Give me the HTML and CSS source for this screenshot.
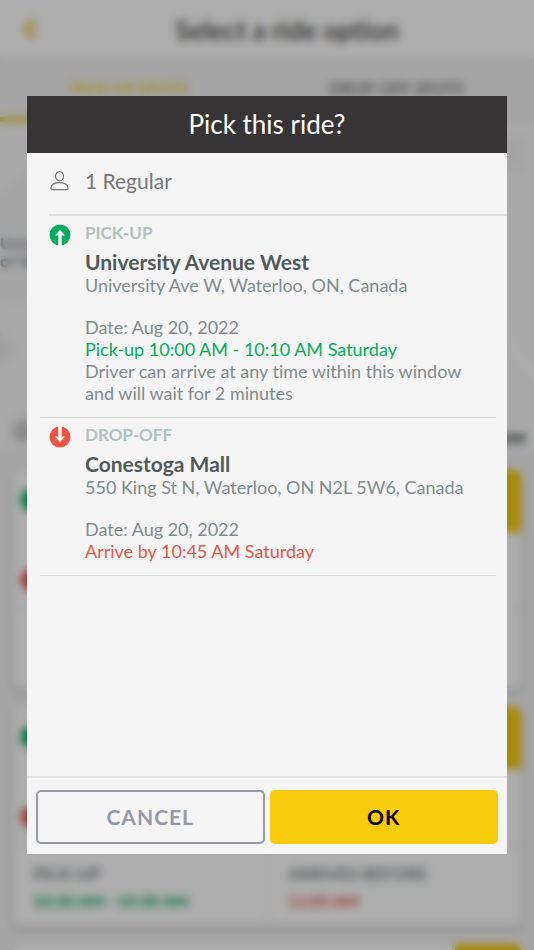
FILE: index.html
```html
<!DOCTYPE html>
<html lang="en">
<head>
<meta charset="utf-8">
<meta name="viewport" content="width=device-width, initial-scale=1">
<title>Pick this ride?</title>
<link rel="stylesheet" href="styles.css">
</head>
<body>
<div class="page" aria-hidden="true" inert>
  <header class="topbar">
    <svg class="back" viewBox="0 0 20 26"><path d="M15 4 6 13l9 9" fill="none" stroke="#ecca3a" stroke-width="5"/></svg>
    <h1 class="topbar-title">Select a ride option</h1>
  </header>
  <nav class="tabs">
    <a class="tab tab-active" href="#pickup">PICK-UP SPOTS</a>
    <a class="tab" href="#dropoff">DROP-OFF SPOTS</a>
  </nav>
  <div class="map">
    <svg class="map-art" viewBox="0 0 534 288" preserveAspectRatio="none">
      <path d="M0 72 30 48v130H0z" fill="#f4f4f4"/>
      <path d="M0 208 16 226 0 244z" fill="#eeeeee"/>
      <path d="M490 0v120q0 110 70 150" fill="none" stroke="#fdfdfd" stroke-width="9"/>
    </svg>
    <div class="map-box"></div>
    <p class="map-label">University<br>of Waterloo</p>
  </div>
  <div class="filter"><span class="filter-icon"></span><span class="filter-text">Now</span></div>
  <main class="rides">
    <article class="ride">
      <div class="ride-top"><div class="stops"><span class="dot green"></span><span class="dot red"></span></div><div class="price"></div></div>
      <div class="ride-times"><div class="time"></div><div class="time"></div></div>
    </article>
    <article class="ride">
      <div class="ride-top"><div class="stops"><span class="dot green"></span><span class="dot red"></span></div><div class="price"></div></div>
      <div class="ride-times">
        <div class="time"><span class="time-label">PICK-UP</span><span class="time-value green-text">10:20 AM - 10:30 AM</span></div>
        <div class="time"><span class="time-label">ARRIVES BEFORE</span><span class="time-value red-text">11:05 AM</span></div>
      </div>
    </article>
    <article class="ride">
      <div class="ride-top"><div class="stops"></div><div class="price"></div></div>
    </article>
  </main>
</div>

<div class="overlay">
  <section class="dialog" role="dialog" aria-modal="true" aria-labelledby="dialog-title">
    <h2 class="dialog-title" id="dialog-title">Pick this ride?</h2>
    <div class="dialog-body">
      <div class="riders">
        <svg class="person" viewBox="0 0 20 20" fill="none" stroke="#777" stroke-width="1.2">
          <ellipse cx="10.500" cy="5.2" rx="4" ry="4.6"/>
          <path d="M3.700 18.600h13.600q2 0 1.800-2C18.400 13.200 14.700 11.600 10.500 11.600S2.600 13.200 1.900 16.600q-.2 2 1.800 2z"/>
        </svg>
        <span>1 Regular</span>
      </div>
      <section class="stop">
        <svg class="stop-icon" viewBox="0 0 22 22">
          <circle cx="11" cy="11" r="10.500" fill="#05ad5c"/>
          <path d="M11 5.800 16 11.400H12.700V22H9.300V11.400H6z" fill="#f5f5f5"/>
        </svg>
        <div class="stop-text">
          <h3 class="stop-kind">PICK-UP</h3>
          <p class="stop-name">University Avenue West</p>
          <p class="stop-line">University Ave W, Waterloo, ON, Canada</p>
          <p class="stop-line stop-date">Date: Aug 20, 2022</p>
          <p class="stop-line green-text">Pick-up 10:00 AM - 10:10 AM Saturday</p>
          <p class="stop-line">Driver can arrive at any time within this window and will wait for 2 minutes</p>
        </div>
      </section>
      <section class="stop">
        <svg class="stop-icon" viewBox="0 0 22 22">
          <circle cx="11" cy="11" r="10.500" fill="#ea5545"/>
          <path d="M9.300 0V10.600H6L11 16.200 16 10.600H12.700V0z" fill="#f5f5f5"/>
        </svg>
        <div class="stop-text">
          <h3 class="stop-kind">DROP-OFF</h3>
          <p class="stop-name">Conestoga Mall</p>
          <p class="stop-line">550 King St N, Waterloo, ON N2L 5W6, Canada</p>
          <p class="stop-line stop-date">Date: Aug 20, 2022</p>
          <p class="stop-line red-text">Arrive by 10:45 AM Saturday</p>
        </div>
      </section>
    </div>
    <footer class="actions">
      <button class="btn btn-cancel" type="button">CANCEL</button>
      <button class="btn btn-ok" type="button">OK</button>
    </footer>
  </section>
</div>
</body>
</html>
```
FILE: styles.css
```css
* { box-sizing: border-box; }
body, h1, h2, h3, p { margin: 0; }
body {
  font-family: Lato, "Liberation Sans", sans-serif;
  font-variant-ligatures: none;
  background: #fff;
  overflow: hidden;
}

/* Page behind the dialog */
.page {
  height: 100vh;
  overflow: hidden;
  background: #f4f4f4;
}
.topbar {
  display: flex;
  align-items: center;
  height: 57px;
  padding: 0 0 0 20px;
  background: #fff;
}
.back { width: 20px; height: 26px; }
.topbar-title {
  flex: 1;
  padding-top: 2px;
  text-align: center;
  font-size: 26px;
  font-weight: 700;
  color: #555;
}
.tabs { display: flex; height: 65px; background: #f3f3f3; }
.tab {
  flex: 1;
  padding: 21px 8px 0 0;
  text-align: center;
  font-size: 16px;
  line-height: 20px;
  font-weight: 700;
  color: #777;
  text-decoration: none;
}
.tab-active { color: #ecca3a; border-bottom: 5px solid #ecca3a; }
.map { position: relative; height: 290px; background: #f9f9f9; }
.map-art { display: block; width: 100%; height: 100%; }
.map-box {
  position: absolute;
  top: 15px;
  right: 10px;
  left: 40px;
  height: 34px;
  background: #f2f2f2;
}
.map-label {
  position: absolute;
  top: 112px;
  left: 0;
  font-size: 16px;
  line-height: 18px;
  font-weight: 700;
  color: #8497a3;
}
.filter {
  display: flex;
  justify-content: space-between;
  align-items: center;
  height: 37px;
  padding: 0 8px 0 12px;
  background: #f9f9f9;
}
.filter-icon { width: 24px; height: 24px; border-radius: 50%; background: #cfcfcf; }
.filter-text { padding-top: 12px; font-size: 17px; font-weight: 700; color: #333; }
.rides { display: grid; gap: 18px; padding: 21px 13px; }
.ride {
  background: #fff;
  border-radius: 6px;
  box-shadow: 0 3px 7px rgba(0, 0, 0, .2);
}
.ride-top {
  display: flex;
  justify-content: space-between;
  height: 139px;
  border-bottom: 1px solid #e2e2e2;
}
.stops { display: grid; gap: 58px; align-content: start; padding: 19px 8px; }
.dot { width: 22px; height: 22px; border-radius: 50%; }
.green { background: #05ad5c; }
.red { background: #ea5545; }
.price { width: 66px; height: 62px; border-radius: 0 6px; background: #f8cb0c; }
.ride-times { display: grid; grid-template-columns: 1fr 1fr; height: 80px; }
.time {
  display: grid;
  gap: 7px;
  align-content: center;
  padding: 2px 20px 0;
  font-size: 17px;
  line-height: 20px;
}
.time + .time { border-left: 1px solid #dfe8e8; }
.time-label { font-weight: 700; color: #7f8c8d; }
.time-value { font-size: 16px; font-weight: 700; }

.green-text { color: #05ad5c; }
.red-text { color: #ea5545; }

/* Dialog */
.overlay {
  position: fixed;
  inset: 0;
  padding: 96px 27px;
  background: rgba(0, 0, 0, .32);
  backdrop-filter: blur(4px);
}
.dialog {
  display: flex;
  flex-direction: column;
  height: 100%;
  background: #f5f5f5;
}
.dialog-title {
  background: #373435;
  color: #fff;
  text-align: center;
  font-size: 26px;
  line-height: 57px;
  font-weight: 400;
}
.dialog-body { flex: 1; overflow: auto; }
.riders {
  display: flex;
  align-items: center;
  gap: 16px;
  height: 63px;
  margin-left: 22px;
  padding-bottom: 6px;
  border-bottom: 2px solid #ddd;
  font-size: 21px;
  color: #777;
}
.person { width: 20px; height: 20px; }
.stop {
  display: flex;
  gap: 14px;
  margin: 0 11px 0 13px;
  padding: 8px 9px 13px;
  border-bottom: 1px solid #d5d5d5;
}
.stop-icon { flex: none; width: 22px; height: 22px; }
.stop-kind { font-size: 17px; line-height: 18px; font-weight: 700; color: #b1c1c1; }
.stop-name { padding-top: 8px; font-size: 21px; line-height: 24px; font-weight: 700; color: #505a5b; }
.stop-line { font-size: 18px; line-height: 22px; color: #7f8c8d; }
.stop-line.green-text { color: #05ad5c; }
.stop-line.red-text { color: #ea5545; }
.stop-date { padding-top: 20px; }
.actions {
  display: grid;
  grid-template-columns: 1fr 1fr;
  gap: 5px;
  padding: 12px 9px 10px;
  border-top: 2px solid #e2e2e2;
}
.btn {
  height: 54px;
  padding: 0 0 2px;
  border: 0;
  border-radius: 5px;
  font-family: inherit;
  font-size: 21px;
  font-weight: 700;
  letter-spacing: 1px;
}
.btn-cancel { background: transparent; border: 2px solid #959aa5; color: #959aa5; }
.btn-ok { background: #f8cb0c; color: #000; }
```
